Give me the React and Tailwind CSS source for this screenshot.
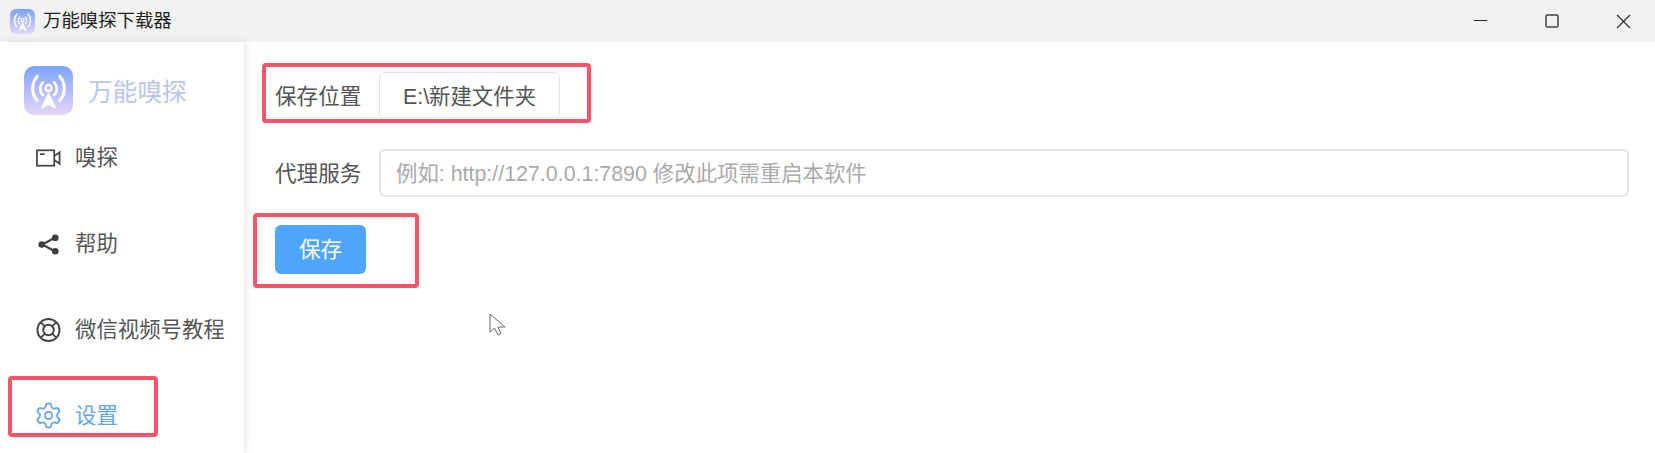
import React from "react";
import { Settings } from "lucide-react";

const cjk = "font-['Liberation_Sans','Noto_Sans_CJK_SC',sans-serif]";

function AppLogo({ className }) {
  return (
    <div className={`flex items-center justify-center bg-gradient-to-b from-[#7ea3fd] to-[#e4d5fb] ${className}`}>
      <svg viewBox="0 0 48 48" className="w-full h-full" fill="none" stroke="#fff" strokeLinecap="round">
        <path d="M13 10 C7 17 7 27 13 34" strokeWidth="3" />
        <path d="M35 10 C41 17 41 27 35 34" strokeWidth="3" />
        <path d="M18.5 16 C15 19.5 15 25 18.5 28.5" strokeWidth="2.6" />
        <path d="M29.5 16 C33 19.5 33 25 29.5 28.5" strokeWidth="2.6" />
        <circle cx="24" cy="21.5" r="3" strokeWidth="2.4" />
        <path d="M24 27 L17.5 41 L24 37.5 L30.5 41 Z" fill="#fff" stroke="#fff" strokeWidth="1.6" strokeLinejoin="round" />
      </svg>
    </div>
  );
}

function VideoIcon() {
  return (
    <svg width="26" height="20" viewBox="0 0 26 20" fill="none" stroke="#444" strokeWidth="1.8">
      <rect x="1" y="2" width="18" height="16" />
      <path d="M4 6 H9" />
      <path d="M19 8 L24.5 4 V16 L19 12" />
    </svg>
  );
}

function ShareIcon() {
  return (
    <svg width="25" height="25" viewBox="0 0 24 24" fill="#3f3f3f" stroke="#3f3f3f">
      <path d="M18 5.5 L6 12 L18 18.5" fill="none" strokeWidth="2" />
      <circle cx="18.5" cy="5.5" r="3.2" stroke="none" />
      <circle cx="5.5" cy="12" r="3.2" stroke="none" />
      <circle cx="18.5" cy="18.5" r="3.2" stroke="none" />
    </svg>
  );
}

function BuoyIcon() {
  return (
    <svg width="26" height="26" viewBox="0 0 26 26" fill="none" stroke="#444" strokeWidth="2">
      <circle cx="13" cy="13" r="11.5" />
      <circle cx="13" cy="13" r="5.5" />
      <path d="M5 5 L9 9 M21 5 L17 9 M5 21 L9 17 M21 21 L17 17" />
    </svg>
  );
}

function NavItem({ icon, label, active }) {
  return (
    <div className={`h-[86px] flex items-center pl-[36px] gap-[14px] text-[21.4px] ${active ? "text-[#62a8e8]" : "text-[#555]"}`}>
      <span className="w-[25px] flex justify-center">{icon}</span>
      <span className="pt-[1px]">{label}</span>
    </div>
  );
}

export default function App() {
  return (
    <div className={`relative w-[1655px] h-[453px] overflow-hidden bg-white flex flex-col ${cjk}`}>
      {/* title bar */}
      <div className="h-[42px] shrink-0 bg-[#f2f2f2] flex items-center">
        <AppLogo className="w-[25px] h-[25px] rounded-[6px] ml-[10px]" />
        <span className="ml-[8px] text-[18.4px] text-[#222]">万能嗅探下载器</span>
        <div className="ml-auto flex items-center">
          <svg width="14" height="14" viewBox="0 0 14 14" className="mr-[57px]" stroke="#222" strokeWidth="1">
            <path d="M0 6.5 H13" />
          </svg>
          <svg width="14" height="14" viewBox="0 0 14 14" className="mr-[57px]" fill="none" stroke="#444" strokeWidth="1.5">
            <rect x="1" y="1" width="12" height="12" rx="1.5" />
          </svg>
          <svg width="15" height="15" viewBox="0 0 15 15" className="mr-[24px]" stroke="#333" strokeWidth="1.3">
            <path d="M1 1 L14 14 M14 1 L1 14" />
          </svg>
        </div>
      </div>

      <div className="flex flex-1 min-h-0">
        {/* sidebar */}
        <aside className="w-[244px] shrink-0 bg-white shadow-[2px_0_8px_rgba(0,0,0,0.1)] z-10">
          <div className="h-[73px] flex items-start pl-[24px] pt-[24px] gap-[15px]">
            <AppLogo className="w-[49px] h-[49px] rounded-[10px]" />
            <span className="text-[24.7px] leading-[49px] pt-[2px] text-[#b9c5ee]">万能嗅探</span>
          </div>
          <NavItem icon={<VideoIcon />} label="嗅探" />
          <NavItem icon={<ShareIcon />} label="帮助" />
          <NavItem icon={<BuoyIcon />} label="微信视频号教程" />
          <NavItem icon={<Settings size={29} strokeWidth={1.5} className="shrink-0 -mt-[2px]" />} label="设置" active />
        </aside>

        {/* settings form */}
        <main className="flex-1 pl-[31px] pr-[26px] pt-[30px]">
          <div className="flex items-center h-[48px] gap-[18px]">
            <label className="text-[21.6px] pt-[2px] text-[#555] w-[86px] whitespace-nowrap">保存位置</label>
            <button className="w-[181px] h-[48px] pt-[2px] border border-[#e4e4e4] rounded-[6px] text-[21.4px] text-[#555]">E:\新建文件夹</button>
          </div>
          <div className="flex items-center h-[48px] gap-[18px] mt-[29px]">
            <label className="text-[21.6px] pt-[2px] text-[#555] w-[86px] whitespace-nowrap">代理服务</label>
            <div className="flex-1 h-[48px] pt-[2px] border-2 border-[#e4e4e4] rounded-[6px] flex items-center pl-[15px] text-[21.4px] text-[#aaa]">
              例如: http://127.0.0.1:7890 修改此项需重启本软件
            </div>
          </div>
          <button className="mt-[28px] w-[91px] h-[49px] pt-[2px] rounded-[6px] bg-[#4ea6ff] text-white text-[21.6px]">保存</button>
        </main>
      </div>

      {/* annotation boxes over the screenshot */}
      <div className="absolute z-20 left-[262px] top-[63px] w-[329px] h-[60px] border-[4px] border-[#fb5468] rounded-[4px]" />
      <div className="absolute z-20 left-[253px] top-[213px] w-[166px] h-[75px] border-[4px] border-[#fb5468] rounded-[4px]" />
      <div className="absolute z-20 left-[8px] top-[376px] w-[150px] h-[61px] border-[4px] border-[#fb5468] rounded-[4px]" />

      {/* mouse cursor */}
      <svg className="absolute z-20 left-[489px] top-[313px]" width="18" height="24" viewBox="0 0 18 24" fill="#fff" stroke="#666" strokeWidth="1">
        <path d="M1 1 V19 L5.5 15 L9 22 L12 20.5 L9 14 L16 14 Z" />
      </svg>
    </div>
  );
}
